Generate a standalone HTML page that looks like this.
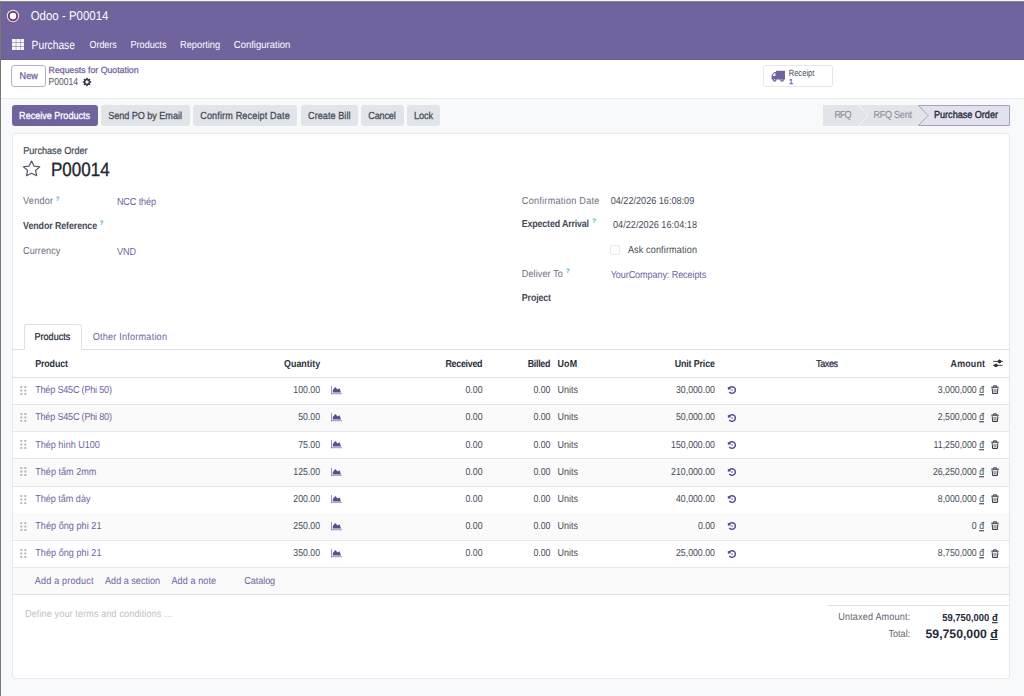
<!DOCTYPE html>
<html><head><meta charset="utf-8"><style>
html,body{margin:0;padding:0;}
body{width:1024px;height:696px;overflow:hidden;position:relative;background:#f8f9fa;font-family:"Liberation Sans",sans-serif;text-rendering:geometricPrecision;}
.t{position:absolute;white-space:nowrap;}
.r{position:absolute;box-sizing:border-box;}
svg{position:absolute;}
</style></head><body>
<div class="r" style="left:0px;top:0px;width:1024px;height:1px;background:#f3f3f3"></div>
<div class="r" style="left:0px;top:1px;width:1024px;height:1px;background:#8e8e8e"></div>
<div class="r" style="left:0px;top:1px;width:1px;height:695px;background:#767676"></div>
<div class="r" style="left:1px;top:2px;width:1023px;height:57px;background:#71639e"></div>
<div class="r" style="left:1px;top:2px;width:1023px;height:1px;background:#675b87"></div>
<div class="r" style="left:1px;top:59px;width:1023px;height:1px;background:#6a5e8e"></div>
<div class="r" style="left:1px;top:60px;width:1023px;height:38px;background:#fff"></div>
<div class="r" style="left:1px;top:98px;width:1023px;height:1px;background:#e7e9ed"></div>
<svg style="left:5.5px;top:8.8px" width="14" height="14" viewBox="0 0 14 14"><circle cx="7" cy="7" r="6.2" fill="#fff" opacity="0.85"/><circle cx="7" cy="7" r="5.2" fill="#7a3f63"/><circle cx="7" cy="7" r="3.2" fill="#fff"/></svg>
<div class="t" style="top:12.00px;font-size:11.46px;line-height:11.46px;color:#fff;left:30.70px;transform:scaleY(1.12);transform-origin:0 8px;">Odoo - P00014</div>
<svg style="left:11.6px;top:38.8px" width="12.3" height="11.2" viewBox="0 0 12.3 11.2"><rect x="0.00" y="0.00" width="3.8" height="3.4" fill="#fff" opacity="0.95"/><rect x="4.25" y="0.00" width="3.8" height="3.4" fill="#fff" opacity="0.95"/><rect x="8.50" y="0.00" width="3.8" height="3.4" fill="#fff" opacity="0.95"/><rect x="0.00" y="3.85" width="3.8" height="3.4" fill="#fff" opacity="0.95"/><rect x="4.25" y="3.85" width="3.8" height="3.4" fill="#fff" opacity="0.95"/><rect x="8.50" y="3.85" width="3.8" height="3.4" fill="#fff" opacity="0.95"/><rect x="0.00" y="7.70" width="3.8" height="3.4" fill="#fff" opacity="0.95"/><rect x="4.25" y="7.70" width="3.8" height="3.4" fill="#fff" opacity="0.95"/><rect x="8.50" y="7.70" width="3.8" height="3.4" fill="#fff" opacity="0.95"/></svg>
<div class="t" style="top:42.00px;font-size:10.27px;line-height:10.27px;color:#fff;left:31.60px;transform:scaleY(1.17);transform-origin:0 7px;">Purchase</div>
<div class="t" style="top:41.00px;font-size:8.93px;line-height:8.93px;color:#fff;left:89.50px;transform:scaleY(1.1393525873069612);transform-origin:0 7px;">Orders</div>
<div class="t" style="top:41.00px;font-size:9.12px;line-height:9.12px;color:#fff;left:130.50px;transform:scaleY(1.1156160750713995);transform-origin:0 7px;">Products</div>
<div class="t" style="top:41.00px;font-size:9.27px;line-height:9.27px;color:#fff;left:180.00px;transform:scaleY(1.0975640350217004);transform-origin:0 7px;">Reporting</div>
<div class="t" style="top:41.00px;font-size:9.5px;line-height:9.5px;color:#fff;left:233.80px;transform:scaleY(1.0709914320685434);transform-origin:0 7px;">Configuration</div>
<div class="r" style="left:11px;top:65px;width:35px;height:22px;border:1px solid #b6acd0;border-radius:3px;background:#fff"></div>
<div class="t" style="top:72.00px;font-size:9.1px;line-height:9.1px;color:#71639e;left:19.60px;transform:scaleY(1.07);transform-origin:0 7px;-webkit-text-stroke:0.25px currentColor;">New</div>
<div class="t" style="top:66.00px;font-size:8.75px;line-height:8.75px;color:#71639e;left:48.60px;transform:scaleY(1.02);transform-origin:0 7px;-webkit-text-stroke:0.25px currentColor;">Requests for Quotation</div>
<div class="t" style="top:78.00px;font-size:8.53px;line-height:8.53px;color:#525863;left:48.60px;transform:scaleY(1.1927806101584015);transform-origin:0 7px;">P00014</div>
<svg style="left:82.1px;top:76.6px" width="10" height="10" viewBox="0 0 10 10"><g fill="#394050"><rect x="4.2" y="0.8" width="1.6" height="2.4" transform="rotate(0 5 5)"/><rect x="4.2" y="0.8" width="1.6" height="2.4" transform="rotate(45 5 5)"/><rect x="4.2" y="0.8" width="1.6" height="2.4" transform="rotate(90 5 5)"/><rect x="4.2" y="0.8" width="1.6" height="2.4" transform="rotate(135 5 5)"/><rect x="4.2" y="0.8" width="1.6" height="2.4" transform="rotate(180 5 5)"/><rect x="4.2" y="0.8" width="1.6" height="2.4" transform="rotate(225 5 5)"/><rect x="4.2" y="0.8" width="1.6" height="2.4" transform="rotate(270 5 5)"/><rect x="4.2" y="0.8" width="1.6" height="2.4" transform="rotate(315 5 5)"/></g><circle cx="5" cy="5" r="2.5" fill="none" stroke="#394050" stroke-width="1.5"/></svg>
<div class="r" style="left:763px;top:65px;width:70px;height:22px;border:1px solid #e5e7eb;border-radius:3px;background:#fff"></div>
<svg style="left:771px;top:69.5px" width="15" height="12" viewBox="0 0 15 12"><path fill="#71639e" d="M5 0.7H14V9.5H5z M0.6 9.5V4.7L3.3 1.9H5.3V9.5z"/><path fill="#fff" opacity="0.85" d="M1.8 4.6L3.4 3.3H4.5V5.9H1.8z"/><circle cx="3.6" cy="9.8" r="1.9" fill="#71639e"/><circle cx="11" cy="9.8" r="1.9" fill="#71639e"/><circle cx="3.6" cy="9.8" r="0.7" fill="#fff" opacity="0.7"/><circle cx="11" cy="9.8" r="0.7" fill="#fff" opacity="0.7"/></svg>
<div class="t" style="top:70.00px;font-size:7.58px;line-height:7.58px;color:#454b57;left:788.70px;transform:scaleY(1.2);transform-origin:0 6px;">Receipt</div>
<div class="t" style="top:78.00px;font-size:7.3px;line-height:7.3px;color:#71639e;left:789.00px;-webkit-text-stroke:0.3px currentColor;">1</div>
<div class="r" style="left:12px;top:105px;width:86px;height:21px;background:#71639e;border-radius:3px"></div>
<div class="t" style="top:112.00px;font-size:9.1px;line-height:9.1px;color:#fff;left:19.10px;letter-spacing:-0.021px;transform:scaleY(1.118067978533095);transform-origin:0 7px;-webkit-text-stroke:0.25px currentColor;">Receive Products</div>
<div class="r" style="left:101px;top:105px;width:89px;height:21px;background:#e1e4e8;border-radius:3px"></div>
<div class="t" style="top:112.00px;font-size:9.1px;line-height:9.1px;color:#454b57;left:108.20px;letter-spacing:-0.037px;transform:scaleY(1.118067978533095);transform-origin:0 7px;-webkit-text-stroke:0.25px currentColor;">Send PO by Email</div>
<div class="r" style="left:192.6px;top:105px;width:104.6px;height:21px;background:#e1e4e8;border-radius:3px"></div>
<div class="t" style="top:112.00px;font-size:9.1px;line-height:9.1px;color:#454b57;left:200.20px;letter-spacing:0.138px;transform:scaleY(1.118067978533095);transform-origin:0 7px;-webkit-text-stroke:0.25px currentColor;">Confirm Receipt Date</div>
<div class="r" style="left:300.5px;top:105px;width:57.60000000000002px;height:21px;background:#e1e4e8;border-radius:3px"></div>
<div class="t" style="top:112.00px;font-size:9.1px;line-height:9.1px;color:#454b57;left:308.10px;letter-spacing:0.042px;transform:scaleY(1.118067978533095);transform-origin:0 7px;-webkit-text-stroke:0.25px currentColor;">Create Bill</div>
<div class="r" style="left:361px;top:105px;width:42.80000000000001px;height:21px;background:#e1e4e8;border-radius:3px"></div>
<div class="t" style="top:112.00px;font-size:9.1px;line-height:9.1px;color:#454b57;left:368.30px;letter-spacing:-0.185px;transform:scaleY(1.118067978533095);transform-origin:0 7px;-webkit-text-stroke:0.25px currentColor;">Cancel</div>
<div class="r" style="left:406.6px;top:105px;width:33.5px;height:21px;background:#e1e4e8;border-radius:3px"></div>
<div class="t" style="top:112.00px;font-size:9.1px;line-height:9.1px;color:#454b57;left:413.90px;letter-spacing:-0.04px;transform:scaleY(1.118067978533095);transform-origin:0 7px;-webkit-text-stroke:0.25px currentColor;">Lock</div>
<svg style="left:823px;top:105px" width="187" height="21" viewBox="0 0 187 21"><path d="M0 0H35L44.5 10.5L35 21H0z" fill="#e1e4e8"/><path d="M36 0H95L104.5 10.5L95 21H36L45.5 10.5z" fill="#e1e4e8"/><path d="M95.5 0.5H186.5V20.5H95.5L105 10.5z" fill="#e4e1ee" stroke="#a89fc8" stroke-width="1"/></svg>
<div class="t" style="top:111.00px;font-size:9.1px;line-height:9.1px;color:#8c9098;left:834.40px;letter-spacing:-1.004px;transform:scaleY(1.118067978533095);transform-origin:0 7px;-webkit-text-stroke:0.1px currentColor;">RFQ</div>
<div class="t" style="top:111.00px;font-size:9.1px;line-height:9.1px;color:#8c9098;left:873.40px;letter-spacing:-0.265px;transform:scaleY(1.118067978533095);transform-origin:0 7px;-webkit-text-stroke:0.1px currentColor;">RFQ Sent</div>
<div class="t" style="top:111.00px;font-size:9.1px;line-height:9.1px;color:#1f2937;left:934.00px;letter-spacing:-0.018px;transform:scaleY(1.118067978533095);transform-origin:0 7px;-webkit-text-stroke:0.3px currentColor;">Purchase Order</div>
<div class="r" style="left:11.6px;top:132.5px;width:998.4px;height:546px;background:#fff;border:1px solid #e6e8eb;border-radius:4px"></div>
<div class="t" style="top:147.00px;font-size:9.1px;line-height:9.1px;color:#454b57;left:23.20px;letter-spacing:0.013px;transform:scaleY(1.118067978533095);transform-origin:0 7px;-webkit-text-stroke:0.2px currentColor;">Purchase Order</div>
<svg style="left:21.6px;top:159.6px" width="19.2" height="17.2" viewBox="0 0 24 23" preserveAspectRatio="none"><path d="M12 1.5l3.1 6.6 7.1.9-5.2 4.9 1.3 7.1L12 17.6 5.7 21l1.3-7.1L1.8 9l7.1-.9z" fill="none" stroke="#555b66" stroke-width="1.55" stroke-linejoin="round"/></svg>
<div class="t" style="top:162.00px;font-size:17.0px;line-height:17.0px;color:#1f2430;left:51.00px;transform:scaleY(1.14);transform-origin:0 14px;-webkit-text-stroke:0.3px currentColor;">P00014</div>
<div class="t" style="top:197.00px;font-size:9.1px;line-height:9.1px;color:#6b7080;left:23.10px;letter-spacing:0.212px;transform:scaleY(1.118067978533095);transform-origin:0 7px;">Vendor</div>
<div class="t" style="top:197.00px;font-size:6.6px;line-height:6.6px;color:#58a6c8;font-weight:bold;left:55.40px;">?</div>
<div class="t" style="top:198.00px;font-size:9.1px;line-height:9.1px;color:#71639e;left:116.90px;letter-spacing:-0.108px;transform:scaleY(1.118067978533095);transform-origin:0 7px;">NCC thép</div>
<div class="t" style="top:222.00px;font-size:8.9px;line-height:8.9px;color:#454b57;font-weight:bold;left:23.10px;letter-spacing:-0.098px;transform:scaleY(1.143193101646198);transform-origin:0 7px;">Vendor Reference</div>
<div class="t" style="top:221.00px;font-size:6.6px;line-height:6.6px;color:#58a6c8;font-weight:bold;left:99.60px;">?</div>
<div class="t" style="top:247.00px;font-size:9.1px;line-height:9.1px;color:#6b7080;left:23.10px;letter-spacing:0.041px;transform:scaleY(1.118067978533095);transform-origin:0 7px;">Currency</div>
<div class="t" style="top:248.00px;font-size:9.1px;line-height:9.1px;color:#71639e;left:116.90px;letter-spacing:-0.007px;transform:scaleY(1.118067978533095);transform-origin:0 7px;">VND</div>
<div class="t" style="top:197.00px;font-size:9.1px;line-height:9.1px;color:#6b7080;left:521.80px;letter-spacing:0.267px;transform:scaleY(1.118067978533095);transform-origin:0 7px;">Confirmation Date</div>
<div class="t" style="top:197.00px;font-size:9.1px;line-height:9.1px;color:#454b57;left:610.70px;letter-spacing:0.006px;transform:scaleY(1.118067978533095);transform-origin:0 7px;">04/22/2026 16:08:09</div>
<div class="t" style="top:220.00px;font-size:8.9px;line-height:8.9px;color:#454b57;font-weight:bold;left:521.80px;letter-spacing:-0.167px;transform:scaleY(1.143193101646198);transform-origin:0 7px;">Expected Arrival</div>
<div class="t" style="top:219.00px;font-size:6.6px;line-height:6.6px;color:#58a6c8;font-weight:bold;left:592.10px;">?</div>
<div class="t" style="top:221.00px;font-size:9.1px;line-height:9.1px;color:#454b57;left:613.00px;letter-spacing:0.029px;transform:scaleY(1.118067978533095);transform-origin:0 7px;">04/22/2026 16:04:18</div>
<div class="r" style="left:610.3px;top:245.3px;width:9.5px;height:9.5px;border:1px solid #e9ebee;border-radius:2px;background:#fff"></div>
<div class="t" style="top:246.00px;font-size:9.1px;line-height:9.1px;color:#454b57;left:627.90px;letter-spacing:0.123px;transform:scaleY(1.118067978533095);transform-origin:0 7px;">Ask confirmation</div>
<div class="t" style="top:270.00px;font-size:9.1px;line-height:9.1px;color:#6b7080;left:521.80px;letter-spacing:0.09px;transform:scaleY(1.118067978533095);transform-origin:0 7px;">Deliver To</div>
<div class="t" style="top:269.00px;font-size:6.6px;line-height:6.6px;color:#58a6c8;font-weight:bold;left:565.80px;">?</div>
<div class="t" style="top:271.00px;font-size:9.1px;line-height:9.1px;color:#71639e;left:610.70px;letter-spacing:-0.104px;transform:scaleY(1.118067978533095);transform-origin:0 7px;">YourCompany: Receipts</div>
<div class="t" style="top:294.00px;font-size:8.9px;line-height:8.9px;color:#454b57;font-weight:bold;left:521.80px;letter-spacing:-0.145px;transform:scaleY(1.143193101646198);transform-origin:0 7px;">Project</div>
<div class="r" style="left:12px;top:349px;width:998px;height:1px;background:#dee2e6"></div>
<div class="r" style="left:23.5px;top:324.2px;width:58.3px;height:26px;background:#fff;border:1px solid #dee2e6;border-bottom:none;border-radius:3px 3px 0 0"></div>
<div class="t" style="top:333.00px;font-size:9.1px;line-height:9.1px;color:#1f2937;left:34.40px;letter-spacing:0.013px;transform:scaleY(1.118067978533095);transform-origin:0 7px;-webkit-text-stroke:0.2px currentColor;">Products</div>
<div class="t" style="top:333.00px;font-size:9.1px;line-height:9.1px;color:#71639e;left:92.70px;letter-spacing:0.219px;transform:scaleY(1.118067978533095);transform-origin:0 7px;">Other Information</div>
<div class="t" style="top:360.00px;font-size:8.9px;line-height:8.9px;color:#2b303a;font-weight:bold;left:35.20px;letter-spacing:-0.12px;transform:scaleY(1.143193101646198);transform-origin:0 7px;">Product</div>
<div class="t" style="top:360.00px;font-size:8.9px;line-height:8.9px;color:#2b303a;font-weight:bold;right:703.90px;text-align:right;letter-spacing:0.001px;transform:scaleY(1.143193101646198);transform-origin:0 7px;">Quantity</div>
<div class="t" style="top:360.00px;font-size:8.9px;line-height:8.9px;color:#2b303a;font-weight:bold;right:541.77px;text-align:right;letter-spacing:-0.269px;transform:scaleY(1.143193101646198);transform-origin:0 7px;">Received</div>
<div class="t" style="top:360.00px;font-size:8.9px;line-height:8.9px;color:#2b303a;font-weight:bold;right:473.91px;text-align:right;letter-spacing:-0.306px;transform:scaleY(1.143193101646198);transform-origin:0 7px;">Billed</div>
<div class="t" style="top:360.00px;font-size:8.9px;line-height:8.9px;color:#2b303a;font-weight:bold;left:557.40px;letter-spacing:0.312px;transform:scaleY(1.143193101646198);transform-origin:0 7px;">UoM</div>
<div class="t" style="top:360.00px;font-size:8.9px;line-height:8.9px;color:#2b303a;font-weight:bold;right:309.24px;text-align:right;letter-spacing:-0.138px;transform:scaleY(1.143193101646198);transform-origin:0 7px;">Unit Price</div>
<div class="t" style="top:360.00px;font-size:9.1px;line-height:9.1px;color:#1f2937;left:816.10px;letter-spacing:-0.443px;transform:scaleY(1.118067978533095);transform-origin:0 7px;-webkit-text-stroke:0.2px currentColor;">Taxes</div>
<div class="t" style="top:360.00px;font-size:8.9px;line-height:8.9px;color:#2b303a;font-weight:bold;right:38.82px;text-align:right;letter-spacing:0.177px;transform:scaleY(1.143193101646198);transform-origin:0 7px;">Amount</div>
<svg style="left:992px;top:357px" width="12" height="11" viewBox="0 0 12 11"><path d="M1 4.4H10.8M1 8.4H10.6" stroke="#3a404c" stroke-width="0.95"/><path d="M5.5 4.4L7.4 2.3 10.2 4.4 7.4 6.5z" fill="#3a404c"/><circle cx="7.3" cy="4.4" r="1.7" fill="#2f3542"/><circle cx="4" cy="8.4" r="1.7" fill="#2f3542"/><path d="M1.4 8.4L4 6.6 6.4 8.4 4 10.2z" fill="#2f3542"/></svg>
<div class="r" style="left:12px;top:376.5px;width:998px;height:1px;background:#dee2e6"></div>
<div class="r" style="left:12px;top:404.0px;width:998px;height:1px;background:#e5e7eb"></div>
<svg style="left:20px;top:385.8px" width="7" height="9" viewBox="0 0 7 9"><rect x="0.3" y="0" width="2" height="2" fill="#b3b7bf"/><rect x="0.3" y="3.5" width="2" height="2" fill="#b3b7bf"/><rect x="0.3" y="7" width="2" height="2" fill="#b3b7bf"/><rect x="4.3" y="0" width="2" height="2" fill="#b3b7bf"/><rect x="4.3" y="3.5" width="2" height="2" fill="#b3b7bf"/><rect x="4.3" y="7" width="2" height="2" fill="#b3b7bf"/></svg>
<div class="t" style="top:386.00px;font-size:9.1px;line-height:9.1px;color:#71639e;left:35.20px;letter-spacing:-0.213px;transform:scaleY(1.118067978533095);transform-origin:0 7px;">Thép S45C (Phi 50)</div>
<div class="t" style="top:386.00px;font-size:8.75px;line-height:8.75px;color:#454b57;right:703.90px;text-align:right;transform:scaleY(1.1627906976744187);transform-origin:0 7px;">100.00</div>
<svg style="left:331px;top:386.0px" width="11" height="8.5" viewBox="0 0 11 8.5"><rect x="0" y="0" width="0.9" height="8.2" fill="#71639e" opacity="0.75"/><rect x="0" y="7.3" width="11" height="0.9" fill="#71639e" opacity="0.8"/><path d="M1.8 6.4V3.9L4.3 1.1 6.7 3.5 8.6 2.2 10 6.4z" fill="#5b4e8f"/></svg>
<div class="t" style="top:386.00px;font-size:8.75px;line-height:8.75px;color:#454b57;right:541.50px;text-align:right;transform:scaleY(1.1627906976744187);transform-origin:0 7px;">0.00</div>
<div class="t" style="top:386.00px;font-size:8.75px;line-height:8.75px;color:#454b57;right:473.60px;text-align:right;transform:scaleY(1.1627906976744187);transform-origin:0 7px;">0.00</div>
<div class="t" style="top:386.00px;font-size:9.0px;line-height:9.0px;color:#454b57;left:557.40px;transform:scaleY(1.1304909560723515);transform-origin:0 7px;">Units</div>
<div class="t" style="top:386.00px;font-size:8.75px;line-height:8.75px;color:#454b57;right:309.10px;text-align:right;transform:scaleY(1.1627906976744187);transform-origin:0 7px;">30,000.00</div>
<svg style="left:726.6px;top:385.3px" width="10" height="10" viewBox="0 0 10 10"><path d="M2.3 3.2A3.3 3.3 0 1 1 2.3 6.8" stroke="#5b4e8f" stroke-width="1.5" fill="none"/><path d="M0.8 2.1H3.6V4.6H0.8z" fill="#5b4e8f"/><circle cx="5.1" cy="5" r="0.85" fill="#5b4e8f" opacity="0.8"/></svg>
<div class="t" style="top:386.00px;font-size:8.75px;line-height:8.75px;color:#454b57;right:40.00px;text-align:right;transform:scaleY(1.1627906976744187);transform-origin:0 7px;">3,000,000 <u style="text-underline-offset:0.5px">đ</u></div>
<svg style="left:990.5px;top:385.3px" width="8" height="9" viewBox="0 0 8 9"><path d="M0.3 2.2H7.7" stroke="#2b303b" stroke-width="1.1"/><path d="M2.6 2V0.8H5.4V2" stroke="#2b303b" stroke-width="0.9" fill="none"/><path d="M1.2 3.2L1.6 8.5H6.4L6.8 3.2" stroke="#2b303b" stroke-width="0.95" fill="none"/><path d="M3.1 3.8V7.6M4.9 3.8V7.6" stroke="#2b303b" stroke-width="0.7"/></svg>
<div class="r" style="left:13px;top:404.5px;width:996px;height:27.2px;background:#fafafa"></div>
<div class="r" style="left:12px;top:431.2px;width:998px;height:1px;background:#e5e7eb"></div>
<svg style="left:20px;top:413.0px" width="7" height="9" viewBox="0 0 7 9"><rect x="0.3" y="0" width="2" height="2" fill="#b3b7bf"/><rect x="0.3" y="3.5" width="2" height="2" fill="#b3b7bf"/><rect x="0.3" y="7" width="2" height="2" fill="#b3b7bf"/><rect x="4.3" y="0" width="2" height="2" fill="#b3b7bf"/><rect x="4.3" y="3.5" width="2" height="2" fill="#b3b7bf"/><rect x="4.3" y="7" width="2" height="2" fill="#b3b7bf"/></svg>
<div class="t" style="top:413.00px;font-size:9.1px;line-height:9.1px;color:#71639e;left:35.20px;letter-spacing:-0.213px;transform:scaleY(1.118067978533095);transform-origin:0 7px;">Thép S45C (Phi 80)</div>
<div class="t" style="top:413.00px;font-size:8.75px;line-height:8.75px;color:#454b57;right:703.90px;text-align:right;transform:scaleY(1.1627906976744187);transform-origin:0 7px;">50.00</div>
<svg style="left:331px;top:413.2px" width="11" height="8.5" viewBox="0 0 11 8.5"><rect x="0" y="0" width="0.9" height="8.2" fill="#71639e" opacity="0.75"/><rect x="0" y="7.3" width="11" height="0.9" fill="#71639e" opacity="0.8"/><path d="M1.8 6.4V3.9L4.3 1.1 6.7 3.5 8.6 2.2 10 6.4z" fill="#5b4e8f"/></svg>
<div class="t" style="top:413.00px;font-size:8.75px;line-height:8.75px;color:#454b57;right:541.50px;text-align:right;transform:scaleY(1.1627906976744187);transform-origin:0 7px;">0.00</div>
<div class="t" style="top:413.00px;font-size:8.75px;line-height:8.75px;color:#454b57;right:473.60px;text-align:right;transform:scaleY(1.1627906976744187);transform-origin:0 7px;">0.00</div>
<div class="t" style="top:413.00px;font-size:9.0px;line-height:9.0px;color:#454b57;left:557.40px;transform:scaleY(1.1304909560723515);transform-origin:0 7px;">Units</div>
<div class="t" style="top:413.00px;font-size:8.75px;line-height:8.75px;color:#454b57;right:309.10px;text-align:right;transform:scaleY(1.1627906976744187);transform-origin:0 7px;">50,000.00</div>
<svg style="left:726.6px;top:412.5px" width="10" height="10" viewBox="0 0 10 10"><path d="M2.3 3.2A3.3 3.3 0 1 1 2.3 6.8" stroke="#5b4e8f" stroke-width="1.5" fill="none"/><path d="M0.8 2.1H3.6V4.6H0.8z" fill="#5b4e8f"/><circle cx="5.1" cy="5" r="0.85" fill="#5b4e8f" opacity="0.8"/></svg>
<div class="t" style="top:413.00px;font-size:8.75px;line-height:8.75px;color:#454b57;right:40.00px;text-align:right;transform:scaleY(1.1627906976744187);transform-origin:0 7px;">2,500,000 <u style="text-underline-offset:0.5px">đ</u></div>
<svg style="left:990.5px;top:412.5px" width="8" height="9" viewBox="0 0 8 9"><path d="M0.3 2.2H7.7" stroke="#2b303b" stroke-width="1.1"/><path d="M2.6 2V0.8H5.4V2" stroke="#2b303b" stroke-width="0.9" fill="none"/><path d="M1.2 3.2L1.6 8.5H6.4L6.8 3.2" stroke="#2b303b" stroke-width="0.95" fill="none"/><path d="M3.1 3.8V7.6M4.9 3.8V7.6" stroke="#2b303b" stroke-width="0.7"/></svg>
<div class="r" style="left:12px;top:458.4px;width:998px;height:1px;background:#e5e7eb"></div>
<svg style="left:20px;top:440.2px" width="7" height="9" viewBox="0 0 7 9"><rect x="0.3" y="0" width="2" height="2" fill="#b3b7bf"/><rect x="0.3" y="3.5" width="2" height="2" fill="#b3b7bf"/><rect x="0.3" y="7" width="2" height="2" fill="#b3b7bf"/><rect x="4.3" y="0" width="2" height="2" fill="#b3b7bf"/><rect x="4.3" y="3.5" width="2" height="2" fill="#b3b7bf"/><rect x="4.3" y="7" width="2" height="2" fill="#b3b7bf"/></svg>
<div class="t" style="top:441.00px;font-size:9.1px;line-height:9.1px;color:#71639e;left:35.20px;letter-spacing:-0.043px;transform:scaleY(1.118067978533095);transform-origin:0 7px;">Thép hình U100</div>
<div class="t" style="top:441.00px;font-size:8.75px;line-height:8.75px;color:#454b57;right:703.90px;text-align:right;transform:scaleY(1.1627906976744187);transform-origin:0 7px;">75.00</div>
<svg style="left:331px;top:440.4px" width="11" height="8.5" viewBox="0 0 11 8.5"><rect x="0" y="0" width="0.9" height="8.2" fill="#71639e" opacity="0.75"/><rect x="0" y="7.3" width="11" height="0.9" fill="#71639e" opacity="0.8"/><path d="M1.8 6.4V3.9L4.3 1.1 6.7 3.5 8.6 2.2 10 6.4z" fill="#5b4e8f"/></svg>
<div class="t" style="top:441.00px;font-size:8.75px;line-height:8.75px;color:#454b57;right:541.50px;text-align:right;transform:scaleY(1.1627906976744187);transform-origin:0 7px;">0.00</div>
<div class="t" style="top:441.00px;font-size:8.75px;line-height:8.75px;color:#454b57;right:473.60px;text-align:right;transform:scaleY(1.1627906976744187);transform-origin:0 7px;">0.00</div>
<div class="t" style="top:441.00px;font-size:9.0px;line-height:9.0px;color:#454b57;left:557.40px;transform:scaleY(1.1304909560723515);transform-origin:0 7px;">Units</div>
<div class="t" style="top:441.00px;font-size:8.75px;line-height:8.75px;color:#454b57;right:309.10px;text-align:right;transform:scaleY(1.1627906976744187);transform-origin:0 7px;">150,000.00</div>
<svg style="left:726.6px;top:439.7px" width="10" height="10" viewBox="0 0 10 10"><path d="M2.3 3.2A3.3 3.3 0 1 1 2.3 6.8" stroke="#5b4e8f" stroke-width="1.5" fill="none"/><path d="M0.8 2.1H3.6V4.6H0.8z" fill="#5b4e8f"/><circle cx="5.1" cy="5" r="0.85" fill="#5b4e8f" opacity="0.8"/></svg>
<div class="t" style="top:441.00px;font-size:8.75px;line-height:8.75px;color:#454b57;right:40.00px;text-align:right;transform:scaleY(1.1627906976744187);transform-origin:0 7px;">11,250,000 <u style="text-underline-offset:0.5px">đ</u></div>
<svg style="left:990.5px;top:439.7px" width="8" height="9" viewBox="0 0 8 9"><path d="M0.3 2.2H7.7" stroke="#2b303b" stroke-width="1.1"/><path d="M2.6 2V0.8H5.4V2" stroke="#2b303b" stroke-width="0.9" fill="none"/><path d="M1.2 3.2L1.6 8.5H6.4L6.8 3.2" stroke="#2b303b" stroke-width="0.95" fill="none"/><path d="M3.1 3.8V7.6M4.9 3.8V7.6" stroke="#2b303b" stroke-width="0.7"/></svg>
<div class="r" style="left:13px;top:458.9px;width:996px;height:27.2px;background:#fafafa"></div>
<div class="r" style="left:12px;top:485.59999999999997px;width:998px;height:1px;background:#e5e7eb"></div>
<svg style="left:20px;top:467.4px" width="7" height="9" viewBox="0 0 7 9"><rect x="0.3" y="0" width="2" height="2" fill="#b3b7bf"/><rect x="0.3" y="3.5" width="2" height="2" fill="#b3b7bf"/><rect x="0.3" y="7" width="2" height="2" fill="#b3b7bf"/><rect x="4.3" y="0" width="2" height="2" fill="#b3b7bf"/><rect x="4.3" y="3.5" width="2" height="2" fill="#b3b7bf"/><rect x="4.3" y="7" width="2" height="2" fill="#b3b7bf"/></svg>
<div class="t" style="top:468.00px;font-size:9.1px;line-height:9.1px;color:#71639e;left:35.20px;letter-spacing:0.01px;transform:scaleY(1.118067978533095);transform-origin:0 7px;">Thép tấm 2mm</div>
<div class="t" style="top:468.00px;font-size:8.75px;line-height:8.75px;color:#454b57;right:703.90px;text-align:right;transform:scaleY(1.1627906976744187);transform-origin:0 7px;">125.00</div>
<svg style="left:331px;top:467.6px" width="11" height="8.5" viewBox="0 0 11 8.5"><rect x="0" y="0" width="0.9" height="8.2" fill="#71639e" opacity="0.75"/><rect x="0" y="7.3" width="11" height="0.9" fill="#71639e" opacity="0.8"/><path d="M1.8 6.4V3.9L4.3 1.1 6.7 3.5 8.6 2.2 10 6.4z" fill="#5b4e8f"/></svg>
<div class="t" style="top:468.00px;font-size:8.75px;line-height:8.75px;color:#454b57;right:541.50px;text-align:right;transform:scaleY(1.1627906976744187);transform-origin:0 7px;">0.00</div>
<div class="t" style="top:468.00px;font-size:8.75px;line-height:8.75px;color:#454b57;right:473.60px;text-align:right;transform:scaleY(1.1627906976744187);transform-origin:0 7px;">0.00</div>
<div class="t" style="top:468.00px;font-size:9.0px;line-height:9.0px;color:#454b57;left:557.40px;transform:scaleY(1.1304909560723515);transform-origin:0 7px;">Units</div>
<div class="t" style="top:468.00px;font-size:8.75px;line-height:8.75px;color:#454b57;right:309.10px;text-align:right;transform:scaleY(1.1627906976744187);transform-origin:0 7px;">210,000.00</div>
<svg style="left:726.6px;top:466.9px" width="10" height="10" viewBox="0 0 10 10"><path d="M2.3 3.2A3.3 3.3 0 1 1 2.3 6.8" stroke="#5b4e8f" stroke-width="1.5" fill="none"/><path d="M0.8 2.1H3.6V4.6H0.8z" fill="#5b4e8f"/><circle cx="5.1" cy="5" r="0.85" fill="#5b4e8f" opacity="0.8"/></svg>
<div class="t" style="top:468.00px;font-size:8.75px;line-height:8.75px;color:#454b57;right:40.00px;text-align:right;transform:scaleY(1.1627906976744187);transform-origin:0 7px;">26,250,000 <u style="text-underline-offset:0.5px">đ</u></div>
<svg style="left:990.5px;top:466.9px" width="8" height="9" viewBox="0 0 8 9"><path d="M0.3 2.2H7.7" stroke="#2b303b" stroke-width="1.1"/><path d="M2.6 2V0.8H5.4V2" stroke="#2b303b" stroke-width="0.9" fill="none"/><path d="M1.2 3.2L1.6 8.5H6.4L6.8 3.2" stroke="#2b303b" stroke-width="0.95" fill="none"/><path d="M3.1 3.8V7.6M4.9 3.8V7.6" stroke="#2b303b" stroke-width="0.7"/></svg>
<div class="r" style="left:12px;top:512.8000000000001px;width:998px;height:1px;background:#e5e7eb"></div>
<svg style="left:20px;top:494.6px" width="7" height="9" viewBox="0 0 7 9"><rect x="0.3" y="0" width="2" height="2" fill="#b3b7bf"/><rect x="0.3" y="3.5" width="2" height="2" fill="#b3b7bf"/><rect x="0.3" y="7" width="2" height="2" fill="#b3b7bf"/><rect x="4.3" y="0" width="2" height="2" fill="#b3b7bf"/><rect x="4.3" y="3.5" width="2" height="2" fill="#b3b7bf"/><rect x="4.3" y="7" width="2" height="2" fill="#b3b7bf"/></svg>
<div class="t" style="top:495.00px;font-size:9.1px;line-height:9.1px;color:#71639e;left:35.20px;letter-spacing:-0.03px;transform:scaleY(1.118067978533095);transform-origin:0 7px;">Thép tấm dày</div>
<div class="t" style="top:495.00px;font-size:8.75px;line-height:8.75px;color:#454b57;right:703.90px;text-align:right;transform:scaleY(1.1627906976744187);transform-origin:0 7px;">200.00</div>
<svg style="left:331px;top:494.8px" width="11" height="8.5" viewBox="0 0 11 8.5"><rect x="0" y="0" width="0.9" height="8.2" fill="#71639e" opacity="0.75"/><rect x="0" y="7.3" width="11" height="0.9" fill="#71639e" opacity="0.8"/><path d="M1.8 6.4V3.9L4.3 1.1 6.7 3.5 8.6 2.2 10 6.4z" fill="#5b4e8f"/></svg>
<div class="t" style="top:495.00px;font-size:8.75px;line-height:8.75px;color:#454b57;right:541.50px;text-align:right;transform:scaleY(1.1627906976744187);transform-origin:0 7px;">0.00</div>
<div class="t" style="top:495.00px;font-size:8.75px;line-height:8.75px;color:#454b57;right:473.60px;text-align:right;transform:scaleY(1.1627906976744187);transform-origin:0 7px;">0.00</div>
<div class="t" style="top:495.00px;font-size:9.0px;line-height:9.0px;color:#454b57;left:557.40px;transform:scaleY(1.1304909560723515);transform-origin:0 7px;">Units</div>
<div class="t" style="top:495.00px;font-size:8.75px;line-height:8.75px;color:#454b57;right:309.10px;text-align:right;transform:scaleY(1.1627906976744187);transform-origin:0 7px;">40,000.00</div>
<svg style="left:726.6px;top:494.1px" width="10" height="10" viewBox="0 0 10 10"><path d="M2.3 3.2A3.3 3.3 0 1 1 2.3 6.8" stroke="#5b4e8f" stroke-width="1.5" fill="none"/><path d="M0.8 2.1H3.6V4.6H0.8z" fill="#5b4e8f"/><circle cx="5.1" cy="5" r="0.85" fill="#5b4e8f" opacity="0.8"/></svg>
<div class="t" style="top:495.00px;font-size:8.75px;line-height:8.75px;color:#454b57;right:40.00px;text-align:right;transform:scaleY(1.1627906976744187);transform-origin:0 7px;">8,000,000 <u style="text-underline-offset:0.5px">đ</u></div>
<svg style="left:990.5px;top:494.1px" width="8" height="9" viewBox="0 0 8 9"><path d="M0.3 2.2H7.7" stroke="#2b303b" stroke-width="1.1"/><path d="M2.6 2V0.8H5.4V2" stroke="#2b303b" stroke-width="0.9" fill="none"/><path d="M1.2 3.2L1.6 8.5H6.4L6.8 3.2" stroke="#2b303b" stroke-width="0.95" fill="none"/><path d="M3.1 3.8V7.6M4.9 3.8V7.6" stroke="#2b303b" stroke-width="0.7"/></svg>
<div class="r" style="left:13px;top:513.3px;width:996px;height:27.2px;background:#fafafa"></div>
<div class="r" style="left:12px;top:540.0px;width:998px;height:1px;background:#e5e7eb"></div>
<svg style="left:20px;top:521.8px" width="7" height="9" viewBox="0 0 7 9"><rect x="0.3" y="0" width="2" height="2" fill="#b3b7bf"/><rect x="0.3" y="3.5" width="2" height="2" fill="#b3b7bf"/><rect x="0.3" y="7" width="2" height="2" fill="#b3b7bf"/><rect x="4.3" y="0" width="2" height="2" fill="#b3b7bf"/><rect x="4.3" y="3.5" width="2" height="2" fill="#b3b7bf"/><rect x="4.3" y="7" width="2" height="2" fill="#b3b7bf"/></svg>
<div class="t" style="top:522.00px;font-size:9.1px;line-height:9.1px;color:#71639e;left:35.20px;letter-spacing:0.038px;transform:scaleY(1.118067978533095);transform-origin:0 7px;">Thép ống phi 21</div>
<div class="t" style="top:522.00px;font-size:8.75px;line-height:8.75px;color:#454b57;right:703.90px;text-align:right;transform:scaleY(1.1627906976744187);transform-origin:0 7px;">250.00</div>
<svg style="left:331px;top:522.0px" width="11" height="8.5" viewBox="0 0 11 8.5"><rect x="0" y="0" width="0.9" height="8.2" fill="#71639e" opacity="0.75"/><rect x="0" y="7.3" width="11" height="0.9" fill="#71639e" opacity="0.8"/><path d="M1.8 6.4V3.9L4.3 1.1 6.7 3.5 8.6 2.2 10 6.4z" fill="#5b4e8f"/></svg>
<div class="t" style="top:522.00px;font-size:8.75px;line-height:8.75px;color:#454b57;right:541.50px;text-align:right;transform:scaleY(1.1627906976744187);transform-origin:0 7px;">0.00</div>
<div class="t" style="top:522.00px;font-size:8.75px;line-height:8.75px;color:#454b57;right:473.60px;text-align:right;transform:scaleY(1.1627906976744187);transform-origin:0 7px;">0.00</div>
<div class="t" style="top:522.00px;font-size:9.0px;line-height:9.0px;color:#454b57;left:557.40px;transform:scaleY(1.1304909560723515);transform-origin:0 7px;">Units</div>
<div class="t" style="top:522.00px;font-size:8.75px;line-height:8.75px;color:#454b57;right:309.10px;text-align:right;transform:scaleY(1.1627906976744187);transform-origin:0 7px;">0.00</div>
<svg style="left:726.6px;top:521.3px" width="10" height="10" viewBox="0 0 10 10"><path d="M2.3 3.2A3.3 3.3 0 1 1 2.3 6.8" stroke="#5b4e8f" stroke-width="1.5" fill="none"/><path d="M0.8 2.1H3.6V4.6H0.8z" fill="#5b4e8f"/><circle cx="5.1" cy="5" r="0.85" fill="#5b4e8f" opacity="0.8"/></svg>
<div class="t" style="top:522.00px;font-size:8.75px;line-height:8.75px;color:#454b57;right:40.00px;text-align:right;transform:scaleY(1.1627906976744187);transform-origin:0 7px;">0 <u style="text-underline-offset:0.5px">đ</u></div>
<svg style="left:990.5px;top:521.3px" width="8" height="9" viewBox="0 0 8 9"><path d="M0.3 2.2H7.7" stroke="#2b303b" stroke-width="1.1"/><path d="M2.6 2V0.8H5.4V2" stroke="#2b303b" stroke-width="0.9" fill="none"/><path d="M1.2 3.2L1.6 8.5H6.4L6.8 3.2" stroke="#2b303b" stroke-width="0.95" fill="none"/><path d="M3.1 3.8V7.6M4.9 3.8V7.6" stroke="#2b303b" stroke-width="0.7"/></svg>
<div class="r" style="left:12px;top:567.2px;width:998px;height:1px;background:#e5e7eb"></div>
<svg style="left:20px;top:549.0px" width="7" height="9" viewBox="0 0 7 9"><rect x="0.3" y="0" width="2" height="2" fill="#b3b7bf"/><rect x="0.3" y="3.5" width="2" height="2" fill="#b3b7bf"/><rect x="0.3" y="7" width="2" height="2" fill="#b3b7bf"/><rect x="4.3" y="0" width="2" height="2" fill="#b3b7bf"/><rect x="4.3" y="3.5" width="2" height="2" fill="#b3b7bf"/><rect x="4.3" y="7" width="2" height="2" fill="#b3b7bf"/></svg>
<div class="t" style="top:549.00px;font-size:9.1px;line-height:9.1px;color:#71639e;left:35.20px;letter-spacing:0.038px;transform:scaleY(1.118067978533095);transform-origin:0 7px;">Thép ống phi 21</div>
<div class="t" style="top:549.00px;font-size:8.75px;line-height:8.75px;color:#454b57;right:703.90px;text-align:right;transform:scaleY(1.1627906976744187);transform-origin:0 7px;">350.00</div>
<svg style="left:331px;top:549.2px" width="11" height="8.5" viewBox="0 0 11 8.5"><rect x="0" y="0" width="0.9" height="8.2" fill="#71639e" opacity="0.75"/><rect x="0" y="7.3" width="11" height="0.9" fill="#71639e" opacity="0.8"/><path d="M1.8 6.4V3.9L4.3 1.1 6.7 3.5 8.6 2.2 10 6.4z" fill="#5b4e8f"/></svg>
<div class="t" style="top:549.00px;font-size:8.75px;line-height:8.75px;color:#454b57;right:541.50px;text-align:right;transform:scaleY(1.1627906976744187);transform-origin:0 7px;">0.00</div>
<div class="t" style="top:549.00px;font-size:8.75px;line-height:8.75px;color:#454b57;right:473.60px;text-align:right;transform:scaleY(1.1627906976744187);transform-origin:0 7px;">0.00</div>
<div class="t" style="top:549.00px;font-size:9.0px;line-height:9.0px;color:#454b57;left:557.40px;transform:scaleY(1.1304909560723515);transform-origin:0 7px;">Units</div>
<div class="t" style="top:549.00px;font-size:8.75px;line-height:8.75px;color:#454b57;right:309.10px;text-align:right;transform:scaleY(1.1627906976744187);transform-origin:0 7px;">25,000.00</div>
<svg style="left:726.6px;top:548.5px" width="10" height="10" viewBox="0 0 10 10"><path d="M2.3 3.2A3.3 3.3 0 1 1 2.3 6.8" stroke="#5b4e8f" stroke-width="1.5" fill="none"/><path d="M0.8 2.1H3.6V4.6H0.8z" fill="#5b4e8f"/><circle cx="5.1" cy="5" r="0.85" fill="#5b4e8f" opacity="0.8"/></svg>
<div class="t" style="top:549.00px;font-size:8.75px;line-height:8.75px;color:#454b57;right:40.00px;text-align:right;transform:scaleY(1.1627906976744187);transform-origin:0 7px;">8,750,000 <u style="text-underline-offset:0.5px">đ</u></div>
<svg style="left:990.5px;top:548.5px" width="8" height="9" viewBox="0 0 8 9"><path d="M0.3 2.2H7.7" stroke="#2b303b" stroke-width="1.1"/><path d="M2.6 2V0.8H5.4V2" stroke="#2b303b" stroke-width="0.9" fill="none"/><path d="M1.2 3.2L1.6 8.5H6.4L6.8 3.2" stroke="#2b303b" stroke-width="0.95" fill="none"/><path d="M3.1 3.8V7.6M4.9 3.8V7.6" stroke="#2b303b" stroke-width="0.7"/></svg>
<div class="r" style="left:13px;top:567.7px;width:996px;height:26.299999999999955px;background:#fafafa"></div>
<div class="r" style="left:12px;top:593.5px;width:998px;height:1.3px;background:#dee2e6"></div>
<div class="t" style="top:577.00px;font-size:9.1px;line-height:9.1px;color:#71639e;left:34.80px;letter-spacing:0.17px;transform:scaleY(1.118067978533095);transform-origin:0 7px;">Add a product</div>
<div class="t" style="top:577.00px;font-size:9.1px;line-height:9.1px;color:#71639e;left:105.00px;letter-spacing:0.005px;transform:scaleY(1.118067978533095);transform-origin:0 7px;">Add a section</div>
<div class="t" style="top:577.00px;font-size:9.1px;line-height:9.1px;color:#71639e;left:171.40px;letter-spacing:0.087px;transform:scaleY(1.118067978533095);transform-origin:0 7px;">Add a note</div>
<div class="t" style="top:577.00px;font-size:9.1px;line-height:9.1px;color:#71639e;left:244.30px;letter-spacing:-0.077px;transform:scaleY(1.118067978533095);transform-origin:0 7px;">Catalog</div>
<div class="t" style="top:610.00px;font-size:9.1px;line-height:9.1px;color:#bcbfc5;left:25.00px;letter-spacing:0.11px;transform:scaleY(1.118067978533095);transform-origin:0 7px;">Define your terms and conditions ...</div>
<div class="r" style="left:827px;top:605px;width:182px;height:1px;background:#dee2e6"></div>
<div class="t" style="top:613.00px;font-size:9.1px;line-height:9.1px;color:#5f636f;right:113.64px;text-align:right;letter-spacing:0.157px;transform:scaleY(1.118067978533095);transform-origin:0 7px;">Untaxed Amount:</div>
<div class="t" style="top:613.00px;font-size:9.43px;line-height:9.43px;color:#1f2937;font-weight:bold;right:26.30px;text-align:right;transform:scaleY(1.078941527534588);transform-origin:0 7px;">59,750,000 <u style="text-underline-offset:0.5px">đ</u></div>
<div class="t" style="top:630.00px;font-size:9.1px;line-height:9.1px;color:#5f636f;right:113.79px;text-align:right;letter-spacing:0.01px;transform:scaleY(1.118067978533095);transform-origin:0 7px;">Total:</div>
<div class="t" style="top:628.00px;font-size:12.25px;line-height:12.25px;color:#1f2937;font-weight:bold;right:26.30px;text-align:right;">59,750,000 <u style="text-underline-offset:0.5px">đ</u></div>
</body></html>
